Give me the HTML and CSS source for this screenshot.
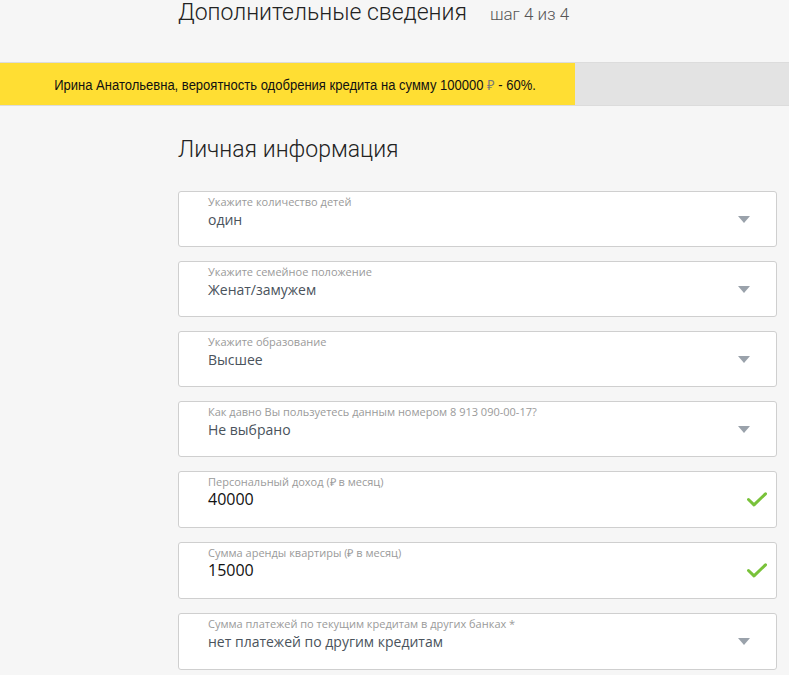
FILE: index.html
```html
<!DOCTYPE html>
<html lang="ru">
<head>
<meta charset="utf-8">
<title>Дополнительные сведения</title>
<link rel="stylesheet" href="styles.css">
</head>
<body>
<header class="top">
  <h1 class="title">Дополнительные сведения</h1>
  <span class="step">шаг 4 из 4</span>
</header>
<div class="banner">
  <div class="banner-fill">
    <p class="banner-text">Ирина Анатольевна, вероятность одобрения кредита на сумму 100000 <span class="rub">₽</span> - 60%.</p>
  </div>
  <div class="banner-rest"></div>
</div>
<main class="content">
  <h2 class="section">Личная информация</h2>
  <div class="fields">
    <div class="field">
      <div class="field-body">
        <span class="label">Укажите количество детей</span>
        <span class="value">один</span>
      </div>
      <span class="arrow"></span>
    </div>
    <div class="field">
      <div class="field-body">
        <span class="label">Укажите семейное положение</span>
        <span class="value">Женат/замужем</span>
      </div>
      <span class="arrow"></span>
    </div>
    <div class="field">
      <div class="field-body">
        <span class="label">Укажите образование</span>
        <span class="value">Высшее</span>
      </div>
      <span class="arrow"></span>
    </div>
    <div class="field">
      <div class="field-body">
        <span class="label">Как давно Вы пользуетесь данным номером 8 913 090-00-17?</span>
        <span class="value">Не выбрано</span>
      </div>
      <span class="arrow"></span>
    </div>
    <div class="field field-input">
      <div class="field-body">
        <span class="label">Персональный доход (₽ в месяц)</span>
        <span class="value value-input">40000</span>
      </div>
      <svg class="check" width="20" height="15" viewBox="0 0 20 15"><path d="M1.5 7.5 L7 12.8 L18.5 1.8" fill="none" stroke="#79c23a" stroke-width="3" stroke-linecap="round" stroke-linejoin="round"/></svg>
    </div>
    <div class="field field-input">
      <div class="field-body">
        <span class="label">Сумма аренды квартиры (₽ в месяц)</span>
        <span class="value value-input">15000</span>
      </div>
      <svg class="check" width="20" height="15" viewBox="0 0 20 15"><path d="M1.5 7.5 L7 12.8 L18.5 1.8" fill="none" stroke="#79c23a" stroke-width="3" stroke-linecap="round" stroke-linejoin="round"/></svg>
    </div>
    <div class="field field-input">
      <div class="field-body">
        <span class="label">Сумма платежей по текущим кредитам в других банках *</span>
        <span class="value">нет платежей по другим кредитам</span>
      </div>
      <span class="arrow"></span>
    </div>
  </div>
</main>
</body>
</html>
```
FILE: styles.css
```css
html, body {
  margin: 0;
  padding: 0;
  background: #f6f6f6;
  font-family: "Liberation Sans", Arial, sans-serif;
  color: #333;
}
.top {
  display: flex;
  align-items: baseline;
  gap: 23px;
  padding: 0 0 0 178px;
  height: 62px;
  box-sizing: border-box;
}
.title {
  margin: 0;
  font-family: Roboto, sans-serif;
  font-weight: 300;
  font-size: 23px;
  line-height: 26px;
  color: #222;
}
.step {
  font-family: Roboto, sans-serif;
  font-weight: 300;
  font-size: 17px;
  color: #555;
}
.banner {
  display: flex;
  height: 42px;
  border-top: 1px solid #dcdcdc;
  border-bottom: 1px solid #dcdcdc;
}
.banner-fill {
  width: 575px;
  background: #ffde33;
  display: flex;
  align-items: center;
  justify-content: center;
}
.banner-text {
  margin: 0 0 0 14px;
  font-family: "Liberation Sans", Arial, sans-serif;
  font-size: 14px;
  color: #111;
  white-space: nowrap;
  transform: scaleX(0.93);
}
.rub { color: #777; }
.banner-rest {
  flex: 1;
  background: #e3e3e3;
}
.content {
  padding: 29px 12px 0 178px;
}
.section {
  margin: 0 0 26px;
  font-family: Roboto, sans-serif;
  font-weight: 300;
  font-size: 23px;
  line-height: 30px;
  color: #222;
}
.fields {
  display: flex;
  flex-direction: column;
  gap: 14px;
}
.field {
  height: 56px;
  box-sizing: border-box;
  background: #fff;
  border: 1px solid #cfcfcf;
  border-radius: 3px;
  display: flex;
  align-items: center;
  padding: 0 9px 0 29px;
}
.field-input { height: 57px; }
.field-body {
  flex: 1;
  display: flex;
  flex-direction: column;
  align-self: flex-start;
  padding-top: 3px;
}
.label {
  font-family: "Open Sans", sans-serif;
  font-size: 11px;
  line-height: 14px;
  color: #9a9a9a;
}
.value {
  font-family: "Open Sans", sans-serif;
  font-size: 14px;
  line-height: 19px;
  margin-top: 1px;
  color: #4a535c;
}
.value-input {
  font-size: 16px;
  color: #111;
}
.arrow {
  width: 0;
  height: 0;
  border-left: 6px solid transparent;
  border-right: 6px solid transparent;
  border-top: 7px solid #9aa2ab;
  margin-right: 17px;
}
.check {
  margin-right: 0;
}
```
